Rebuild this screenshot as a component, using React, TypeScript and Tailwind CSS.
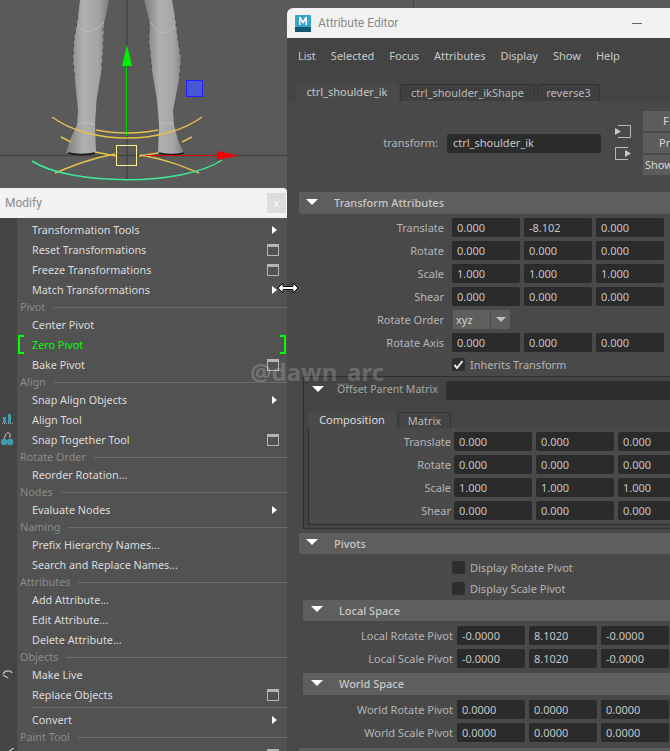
import type { ReactNode } from "react";

const font = "font-['Noto_Sans',sans-serif] text-[11px]";

type MenuEntry =
  | { kind: "item"; label: string; arrow?: boolean; box?: boolean; active?: boolean }
  | { kind: "section"; label: string }
  | { kind: "divider" };

const menu: MenuEntry[] = [
  { kind: "item", label: "Transformation Tools", arrow: true },
  { kind: "item", label: "Reset Transformations", box: true },
  { kind: "item", label: "Freeze Transformations", box: true },
  { kind: "item", label: "Match Transformations", arrow: true },
  { kind: "section", label: "Pivot" },
  { kind: "item", label: "Center Pivot" },
  { kind: "item", label: "Zero Pivot", active: true },
  { kind: "item", label: "Bake Pivot", box: true },
  { kind: "section", label: "Align" },
  { kind: "item", label: "Snap Align Objects", arrow: true },
  { kind: "item", label: "Align Tool" },
  { kind: "item", label: "Snap Together Tool", box: true },
  { kind: "section", label: "Rotate Order" },
  { kind: "item", label: "Reorder Rotation..." },
  { kind: "section", label: "Nodes" },
  { kind: "item", label: "Evaluate Nodes", arrow: true },
  { kind: "section", label: "Naming" },
  { kind: "item", label: "Prefix Hierarchy Names..." },
  { kind: "item", label: "Search and Replace Names..." },
  { kind: "section", label: "Attributes" },
  { kind: "item", label: "Add Attribute..." },
  { kind: "item", label: "Edit Attribute..." },
  { kind: "item", label: "Delete Attribute..." },
  { kind: "section", label: "Objects" },
  { kind: "item", label: "Make Live" },
  { kind: "item", label: "Replace Objects", box: true },
  { kind: "divider" },
  { kind: "item", label: "Convert", arrow: true },
  { kind: "section", label: "Paint Tool" },
  { kind: "item", label: "", box: true },
];

function Viewport() {
  return (
    <svg className="absolute left-0 top-0" width="300" height="190" viewBox="0 0 300 190" fill="none">
      <path d="M127 0V180M0 155.5H287" stroke="#454545" strokeWidth="1.5" />
      <defs>
        <linearGradient id="leg" x1="0" x2="1" y1="0" y2="0">
          <stop offset="0" stopColor="#7c7c7c" />
          <stop offset="0.4" stopColor="#b0b0b0" />
          <stop offset="0.75" stopColor="#a4a4a4" />
          <stop offset="1" stopColor="#7c7c7c" />
        </linearGradient>
      </defs>
      <path d="M80 0H109L106 15L104 23L103 50L101.5 70L96.5 100L95 125L96 153C88 155 74 155 66 153L70 140L77 125L78 110L75 80L73 60L74 40L77 23L78 17Z" fill="url(#leg)" />
      <path d="M144 0H172L175 17L178 40L181 60L179 80L173 110L174 125L178 140L184 153C176 155 166 155 158 153L159 125L157 100L152 70L149 40L150 23L148 15Z" fill="url(#leg)" />
      <path d="M78 17L74 40L73 60L75 80M103 28L103 50L101 70" stroke="#333" strokeWidth="0.6" strokeDasharray="3 4" />
      <path d="M149 30L149 45L152 70M175 17L178 40L181 60L179 80" stroke="#333" strokeWidth="0.6" strokeDasharray="3 4" />
      <path d="M78 25C82 33 92 35 104 22" stroke="#bcbcbc" strokeWidth="1" />
      <path d="M150 22C160 36 168 36 175 25" stroke="#bcbcbc" strokeWidth="1" />
      <path d="M78 125C82 122 90 122 95 125M159 125C164 122 170 122 174 125" stroke="#c0c0c0" strokeWidth="1" />
      <path d="M68 153C75 155 88 155 95 153" stroke="#1c1c1c" strokeWidth="1.5" />
      <path d="M159 153C167 155 176 155 184 153" stroke="#1c1c1c" strokeWidth="1.5" />
      <g stroke="#e2c14f" strokeWidth="1.5">
        <path d="M52 117C90 145 164 145 202 117" />
        <path d="M96 130C115 134 140 134 158 130" />
        <path d="M61 137L71 142M192 137L182 142" />
        <path d="M55 173C72 166 88 159 115 154" />
        <path d="M95 152L116 156M139 156L158 153" />
        <path d="M199 173C182 166 165 159 140 155" />
      </g>
      <path d="M32 161C70 186 184 186 222 160" stroke="#3fe898" strokeWidth="1.5" />
      <rect x="116.5" y="145.5" width="20" height="20" stroke="#fff08c" strokeWidth="1" />
      <rect x="186.5" y="80.5" width="16" height="16" fill="#4a55d8" stroke="#2222ff" strokeWidth="1" />
      <path d="M126.5 136V60" stroke="#00e000" strokeWidth="1" />
      <path d="M127 45L122 66H132Z" fill="#00f000" />
      <path d="M146 155.5H220" stroke="#e00000" strokeWidth="1" />
      <path d="M217 151L239 155.5L217 160Z" fill="#f00000" />
    </svg>
  );
}

function OptionBox() {
  return <div className="h-3 w-3 border border-t-[3px] border-[#b4b4b4] box-border" />;
}

function ArrowRight() {
  return <div className="mr-[2px] h-0 w-0 border-y-[4px] border-l-[5px] border-y-transparent border-l-white" />;
}

function Bracket({ side }: { side: "left" | "right" }) {
  return (
    <div
      className={
        side === "left"
          ? "absolute left-[1px] top-0 h-[19px] w-[6px] border-2 border-r-0 border-[#00ff00]"
          : "absolute right-[1px] top-0 h-[19px] w-[6px] border-2 border-l-0 border-[#00ff00]"
      }
    />
  );
}

function ModifyMenu() {
  return (
    <div className={`absolute left-0 top-[188px] flex h-[563px] w-[287px] flex-col ${font}`}>
      <div className="flex h-[30px] shrink-0 items-center justify-between rounded-tr-[4px] bg-[#f2f2f2] pl-[5px] pr-[1px]">
        <span className="font-['Roboto',sans-serif] text-[12px] text-[#8c8c8c]">Modify</span>
        <div className="flex h-5 w-[19px] items-center justify-center bg-[#dddddd] text-white">x</div>
      </div>
      <div className="flex min-h-0 flex-1">
        <div className="relative w-[17px] shrink-0 bg-[#444444]">
          <svg className="absolute left-[1px] top-[196px]" width="14" height="32" viewBox="0 0 14 32" fill="none">
            <path d="M2 3H5V9H2ZM7 0H10V9H7Z" fill="#3f9cb0" />
            <path d="M1 9.5H12" stroke="#9a9a9a" strokeWidth="1" strokeDasharray="1 1" />
            <path d="M3 25L5 20C6 18 9 18 9 21L9 24" stroke="#c8c8c8" strokeWidth="1" />
            <circle cx="3.2" cy="28" r="3.2" fill="#3f9cb0" />
            <circle cx="9.2" cy="28" r="3.2" fill="#3f9cb0" />
          </svg>
          <svg className="absolute left-[2px] top-[452px]" width="12" height="12" viewBox="0 0 12 12" fill="none">
            <path d="M1 4C3 0 9 0 10 3M1 5L6 8" stroke="#c4c4c4" strokeWidth="1.2" />
          </svg>
          <svg className="absolute left-[8px] top-[530px]" width="6" height="5" viewBox="0 0 6 5" fill="none">
            <path d="M6 0L0 4" stroke="#c4c4c4" strokeWidth="1.2" />
          </svg>
        </div>
        <div className="min-w-0 flex-1 overflow-hidden bg-[#525252] text-[10.8px] text-[#dcdcdc]">
          <div className="pt-[2px]">
            {menu.map((entry, i) => {
              if (entry.kind === "divider") {
                return (
                  <div key={i} className="flex h-[5px] items-center pl-[16px]">
                    <div className="h-px flex-1 bg-[#6c6c6c]" />
                  </div>
                );
              }
              if (entry.kind === "section") {
                return (
                  <div key={i} className="flex h-[15px] items-center gap-2 pl-[3px] text-[#8a8a8a]">
                    <span>{entry.label}</span>
                    <div className="h-px flex-1 bg-[#6c6c6c]" />
                  </div>
                );
              }
              return (
                <div key={i} className="relative flex h-5 items-center justify-between pl-[15px] pr-[8px]">
                  <span className={entry.active ? "text-[#00ff00]" : ""}>{entry.label}</span>
                  {entry.arrow && <ArrowRight />}
                  {entry.box && <OptionBox />}
                  {entry.active && <Bracket side="left" />}
                  {entry.active && <Bracket side="right" />}
                </div>
              );
            })}
          </div>
        </div>
      </div>
    </div>
  );
}

function Triangle() {
  return <div className="h-0 w-0 border-x-[6px] border-t-[6px] border-x-transparent border-t-white" />;
}

function Field({ value, className }: { value: string; className: string }) {
  return (
    <div className={`flex h-[19px] items-center rounded-[2px] bg-[#2b2b2b] pl-[5px] pt-px text-[#c4c4c4] ${className}`}>
      {value}
    </div>
  );
}

function FieldRow({
  label,
  values,
  labelClass,
  fieldClass,
}: {
  label: string;
  values: string[];
  labelClass: string;
  fieldClass: string;
}) {
  return (
    <div className="flex h-[23px] items-center gap-1">
      <div className={`shrink-0 pt-px text-right text-[#b4b4b4] ${labelClass}`}>{label}</div>
      {values.map((value, i) => (
        <Field key={i} value={value} className={fieldClass} />
      ))}
    </div>
  );
}

function Header({ title, className }: { title: string; className: string }) {
  return (
    <div className={`flex items-center rounded-[2px] bg-[#5e5e5e] font-medium text-[#c8c8c8] ${className}`}>
      <div className="mr-[16px] -mt-[3px]">
        <Triangle />
      </div>
      <span className="pt-px">{title}</span>
    </div>
  );
}

function Check({ checked, label }: { checked?: boolean; label: string }) {
  return (
    <div className="flex h-[21px] items-center pl-[153px] text-[#b4b4b4]">
      <div className="mr-[5px] flex h-[13px] w-[13px] items-center justify-center rounded-[2px] bg-[#2e2e2e]">
        {checked && (
          <svg width="11" height="11" viewBox="0 0 11 11" fill="none">
            <path d="M1.5 6L4 9L9.5 2" stroke="#e8e8e8" strokeWidth="2" />
          </svg>
        )}
      </div>
      <span className="pt-px">{label}</span>
    </div>
  );
}

function SmallButton({ label, className }: { label: string; className: string }) {
  return <div className={`flex h-5 w-[60px] items-center bg-[#5c5c5c] text-[#d8d8d8] ${className}`}>{label}</div>;
}

function AttributeEditor() {
  const mainLabel = "w-[149px] pr-[4px]";
  const mainField = "w-[68px] shrink-0";
  const subLabel = "w-[142px] -mr-[1px]";
  const subField = "w-[78px] shrink-0";
  const pivotLabel = "w-[150px]";

  return (
    <div className={`absolute left-[287px] top-[8px] flex h-[743px] w-[420px] flex-col overflow-hidden rounded-t-[6px] bg-[#444444] ${font}`}>
      <div className="flex h-[30px] shrink-0 items-center bg-[#f2f2f2] pl-[8px] font-['Roboto',sans-serif] text-[12px] text-[#8c8c8c]">
        <svg className="mr-[7px]" width="16" height="17" viewBox="0 0 16 17">
          <rect width="16" height="12" rx="1" fill="#37a5cc" />
          <rect y="12" width="16" height="5" fill="#13566f" />
          <path d="M4 10V2H5.6L8 6L10.4 2H12V10H10.5V5L8 9L5.5 5V10Z" fill="#fff" />
        </svg>
        <span className="w-[314px]">Attribute Editor</span>
        <div className="h-px w-[10px] bg-[#666666]" />
      </div>

      <div className="flex h-[36px] shrink-0 items-center gap-[15px] pl-[11px] text-[#c8c8c8]">
        {["List", "Selected", "Focus", "Attributes", "Display", "Show", "Help"].map((item) => (
          <span key={item}>{item}</span>
        ))}
      </div>

      <div className="mt-[9px] flex h-[18px] shrink-0 items-end gap-[2px] pl-[9px] text-[#b8b8b8]">
        <div className="flex h-[18px] w-[102px] items-center justify-center rounded-t-[3px] bg-[#4a4a4a] text-[#c8c8c8]">ctrl_shoulder_ik</div>
        <div className="flex h-[17px] w-[135px] items-center justify-center rounded-t-[3px] border border-b-0 border-[#333333] bg-[#3f3f3f]">ctrl_shoulder_ikShape</div>
        <div className="flex h-[17px] w-[63px] items-center justify-center rounded-t-[3px] border border-b-0 border-[#333333] bg-[#3f3f3f]">reverse3</div>
      </div>

      <div className="flex h-[91px] shrink-0 bg-[#494949]">
        <div className="flex items-center pb-[7px]">
          <span className="w-[151px] text-right text-[#b4b4b4]">transform:</span>
          <div className="ml-[9px] flex h-[19px] w-[154px] items-center rounded-[2px] bg-[#2b2b2b] pl-[6px] text-[#c8c8c8]">ctrl_shoulder_ik</div>
        </div>
        <div className="ml-[14px] flex flex-col justify-center gap-[7px] pb-[8px]">
          <svg width="16" height="15" viewBox="0 0 16 15" fill="none">
            <path d="M3 1.5H15.5V13.5H3" stroke="#b8b8b8" />
            <path d="M0 4L6 7.5L0 11Z" fill="#c8c8c8" />
          </svg>
          <svg width="16" height="15" viewBox="0 0 16 15" fill="none">
            <path d="M13 1.5H0.5V13.5H13" stroke="#b8b8b8" />
            <path d="M10 4L16 7.5L10 11Z" fill="#c8c8c8" />
          </svg>
        </div>
        <div className="ml-[12px] flex flex-col justify-center gap-[2px] pb-[7px]">
          <SmallButton label="F" className="pl-5" />
          <SmallButton label="Pr" className="pl-4" />
          <SmallButton label="Show" className="pl-[2px]" />
        </div>
      </div>

      <div className="flex-1 overflow-hidden bg-[#494949] pl-[12px]">
        <Header title="Transform Attributes" className="h-[22px] pl-[7px]" />
        <div className="pt-[2px]">
          <FieldRow label="Translate" values={["0.000", "-8.102", "0.000"]} labelClass={mainLabel} fieldClass={mainField} />
          <FieldRow label="Rotate" values={["0.000", "0.000", "0.000"]} labelClass={mainLabel} fieldClass={mainField} />
          <FieldRow label="Scale" values={["1.000", "1.000", "1.000"]} labelClass={mainLabel} fieldClass={mainField} />
          <FieldRow label="Shear" values={["0.000", "0.000", "0.000"]} labelClass={mainLabel} fieldClass={mainField} />
          <div className="flex h-[23px] items-center">
            <div className={`shrink-0 pt-px text-right text-[#b4b4b4] ${mainLabel}`}>Rotate Order</div>
            <div className="ml-[5px] flex h-[19px] w-[37px] items-center bg-[#5e5e5e] pl-[3px] pt-px text-[#d0d0d0]">xyz</div>
            <div className="ml-px flex h-[19px] w-[19px] items-center justify-center rounded-r-[2px] bg-[#5e5e5e]">
              <div className="h-0 w-0 border-x-[5px] border-t-[5px] border-x-transparent border-t-[#c0c0c0]" />
            </div>
          </div>
          <FieldRow label="Rotate Axis" values={["0.000", "0.000", "0.000"]} labelClass={mainLabel} fieldClass={mainField} />
          <Check checked label="Inherits Transform" />
        </div>

        <div className="ml-[4px] mt-[1px] h-[153px] rounded-tl-[2px] border border-r-0 border-[#2e2e2e] bg-[#444444] pl-[4px]">
          <div className="flex h-[26px] items-center">
            <div className="ml-[4px] -mt-[3px]">
              <Triangle />
            </div>
            <span className="ml-[13px] w-[109px] shrink-0 text-[10.6px] text-[#a8a8a8]">Offset Parent Matrix</span>
            <div className="h-[19px] flex-1 rounded-[2px] bg-[#2e2e2e]" />
          </div>
          <div className="mt-[9px] flex h-[16px] items-end gap-[2px]">
            <div className="flex h-[16px] w-[88px] items-center justify-center rounded-t-[2px] bg-[#4a4a4a] pt-px text-[#dcdcdc]">Composition</div>
            <div className="flex h-[16px] w-[53px] items-center justify-center rounded-t-[2px] border border-b-0 border-[#333333] pt-px text-[#b8b8b8]">Matrix</div>
          </div>
          <div className="h-[97px] border border-r-0 border-t-0 border-[#2e2e2e] bg-[#4a4a4a] pt-[2px]">
            <FieldRow label="Translate" values={["0.000", "0.000", "0.000"]} labelClass={subLabel} fieldClass={subField} />
            <FieldRow label="Rotate" values={["0.000", "0.000", "0.000"]} labelClass={subLabel} fieldClass={subField} />
            <FieldRow label="Scale" values={["1.000", "1.000", "1.000"]} labelClass={subLabel} fieldClass={subField} />
            <FieldRow label="Shear" values={["0.000", "0.000", "0.000"]} labelClass={subLabel} fieldClass={subField} />
          </div>
        </div>

        <Header title="Pivots" className="mt-[4px] h-[21px] pl-[7px]" />
        <div className="pt-[3px]">
          <Check label="Display Rotate Pivot" />
          <Check label="Display Scale Pivot" />
        </div>

        <div className="pl-[4px]">
          <Header title="Local Space" className="mt-[1px] h-[21px] pl-[8px]" />
          <div className="pt-[3px]">
            <FieldRow label="Local Rotate Pivot" values={["-0.0000", "8.1020", "-0.0000"]} labelClass={pivotLabel} fieldClass={mainField} />
            <FieldRow label="Local Scale Pivot" values={["-0.0000", "8.1020", "-0.0000"]} labelClass={pivotLabel} fieldClass={mainField} />
          </div>
          <Header title="World Space" className="mt-[3px] h-[22px] pl-[8px]" />
          <div className="pt-[3px]">
            <FieldRow label="World Rotate Pivot" values={["0.0000", "0.0000", "0.0000"]} labelClass={pivotLabel} fieldClass={mainField} />
            <FieldRow label="World Scale Pivot" values={["0.0000", "0.0000", "0.0000"]} labelClass={pivotLabel} fieldClass={mainField} />
          </div>
        </div>
        <div className="mt-[4px] h-4 rounded-[2px] bg-[#5e5e5e]" />
      </div>
    </div>
  );
}

function Overlay({ children }: { children: ReactNode }) {
  return <div className="pointer-events-none absolute inset-0">{children}</div>;
}

export default function App() {
  return (
    <div className="relative h-[751px] w-[670px] overflow-hidden bg-[#5a5a5a]">
      <Viewport />
      <div className="absolute left-[413px] top-0 h-2 w-px bg-[#454545]" />
      <ModifyMenu />
      <AttributeEditor />
      <Overlay>
        <div className="absolute left-[250px] top-[354px] font-['Noto_Sans',sans-serif] text-[24px] font-bold leading-[36px] text-white/20">
          @dawn_arc
        </div>
        <svg className="absolute left-[277px] top-[282px]" width="22" height="12" viewBox="0 0 22 12">
          <path d="M1 6L6 1V4.5H16V1L21 6L16 11V7.5H6V11Z" fill="#fff" stroke="#000" strokeWidth="1" />
        </svg>
      </Overlay>
    </div>
  );
}
